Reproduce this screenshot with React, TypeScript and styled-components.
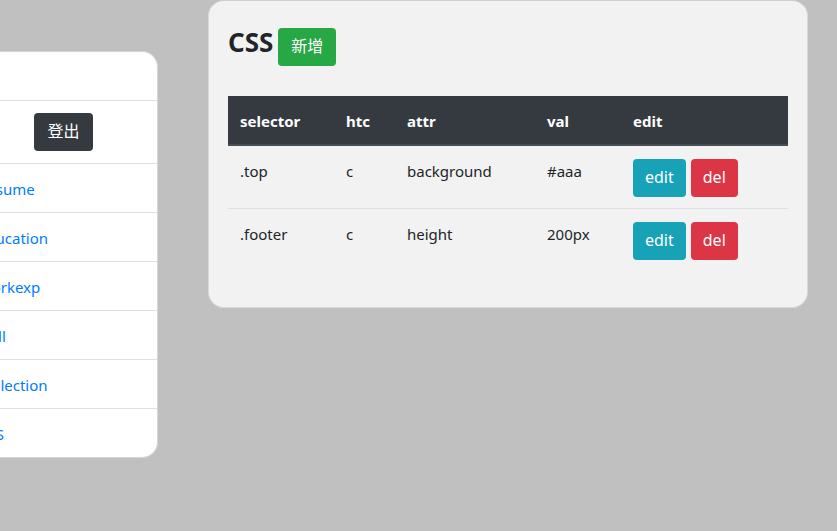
import React from "react";
import styled, { createGlobalStyle } from "styled-components";

const Global = createGlobalStyle`
  html, body { margin: 0; padding: 0; }
  body {
    background: #c0c0c0;
    font-family: "Noto Sans", "Noto Sans CJK SC", sans-serif;
    font-size: 15px;
    line-height: 24px;
    color: #212529;
  }
`;

const Page = styled.div`
  display: flex;
  align-items: flex-start;
  gap: 50px;
  width: 837px;
  height: 531px;
  overflow: hidden;
`;

const Sidebar = styled.nav`
  margin-top: 51px;
  margin-left: -30px;
  width: 187px;
  flex: none;
  background: #fff;
  border: 1px solid #d6d6d6;
  border-left: none;
  border-radius: 0 16px 16px 0;
  overflow: hidden;
`;

const NavItem = styled.div<{ $center?: boolean }>`
  height: 49px;
  box-sizing: border-box;
  padding: 13px 8px 11px;
  display: flex;
  align-items: center;
  justify-content: ${(p) => (p.$center ? "center" : "flex-start")};
  border-top: 1px solid #dfdfdf;
  &:first-child { border-top: none; height: 48px; }
`;

const LogoutRow = styled(NavItem)`
  height: 63px;
  padding: 12px 0;
`;

const NavLink = styled.a`
  color: #007bff;
  text-decoration: none;
`;

const Btn = styled.button<{ $bg: string; $pad?: number }>`
  font-family: "Noto Sans", "Noto Sans CJK SC", sans-serif;
  font-size: 16px;
  line-height: 24px;
  padding: 6px ${(p) => p.$pad ?? 12}px 8px;
  height: 38px;
  border: none;
  border-radius: 4px;
  background: ${(p) => p.$bg};
  color: #fff;
  cursor: pointer;
`;

const Card = styled.main`
  width: 600px;
  height: 308px;
  flex: none;
  box-sizing: border-box;
  background: #f2f2f2;
  border: 1px solid #dadada;
  border-top-color: #d0d0d0;
  border-radius: 16px;
  padding: 26px 19px 20px;
`;

const TitleRow = styled.div`
  display: flex;
  align-items: baseline;
  gap: 5px;
`;

const Title = styled.h3`
  margin: 0;
  font-size: 26px;
  font-weight: 700;
  line-height: 30px;
  color: #212529;
`;

const Table = styled.table`
  margin-top: 30px;
  width: 560px;
  border-collapse: collapse;
  table-layout: fixed;
`;

const Th = styled.th`
  background: #343a40;
  color: #fff;
  font-weight: 700;
  text-align: left;
  padding: 13px 12px 11px;
  height: 24px;
  border-bottom: 2px solid #454d55;
`;

const Td = styled.td`
  padding: 13px 12px 11px;
  vertical-align: top;
  border-top: 1px solid #dee2e6;
  white-space: nowrap;
`;

const ActionCell = styled.div`
  display: flex;
  gap: 5px;
`;

const columns = [
  { key: "selector", w: 106 },
  { key: "htc", w: 61 },
  { key: "attr", w: 140 },
  { key: "val", w: 86 },
  { key: "edit", w: 167 },
];

const rows = [
  { selector: ".top", htc: "c", attr: "background", val: "#aaa" },
  { selector: ".footer", htc: "c", attr: "height", val: "200px" },
];

const links = ["Resume", "Education", "Workexp", "Skill", "Collection", "CSS"];

export default function App() {
  return (
    <>
      <Global />
      <Page>
        <Sidebar>
          <NavItem />
          <LogoutRow $center>
            <Btn $bg="#343a40" $pad={13}>登出</Btn>
          </LogoutRow>
          {links.map((l) => (
            <NavItem key={l}>
              <NavLink href="#">{l}</NavLink>
            </NavItem>
          ))}
        </Sidebar>
        <Card>
          <TitleRow>
            <Title>CSS</Title>
            <Btn $bg="#28a745" $pad={13}>新增</Btn>
          </TitleRow>
          <Table>
            <colgroup>
              {columns.map((c) => (
                <col key={c.key} style={{ width: c.w }} />
              ))}
            </colgroup>
            <thead>
              <tr>
                {columns.map((c) => (
                  <Th key={c.key}>{c.key}</Th>
                ))}
              </tr>
            </thead>
            <tbody>
              {rows.map((r) => (
                <tr key={r.selector}>
                  <Td>{r.selector}</Td>
                  <Td>{r.htc}</Td>
                  <Td>{r.attr}</Td>
                  <Td>{r.val}</Td>
                  <Td>
                    <ActionCell>
                      <Btn $bg="#17a2b8">edit</Btn>
                      <Btn $bg="#dc3545">del</Btn>
                    </ActionCell>
                  </Td>
                </tr>
              ))}
            </tbody>
          </Table>
        </Card>
      </Page>
    </>
  );
}
